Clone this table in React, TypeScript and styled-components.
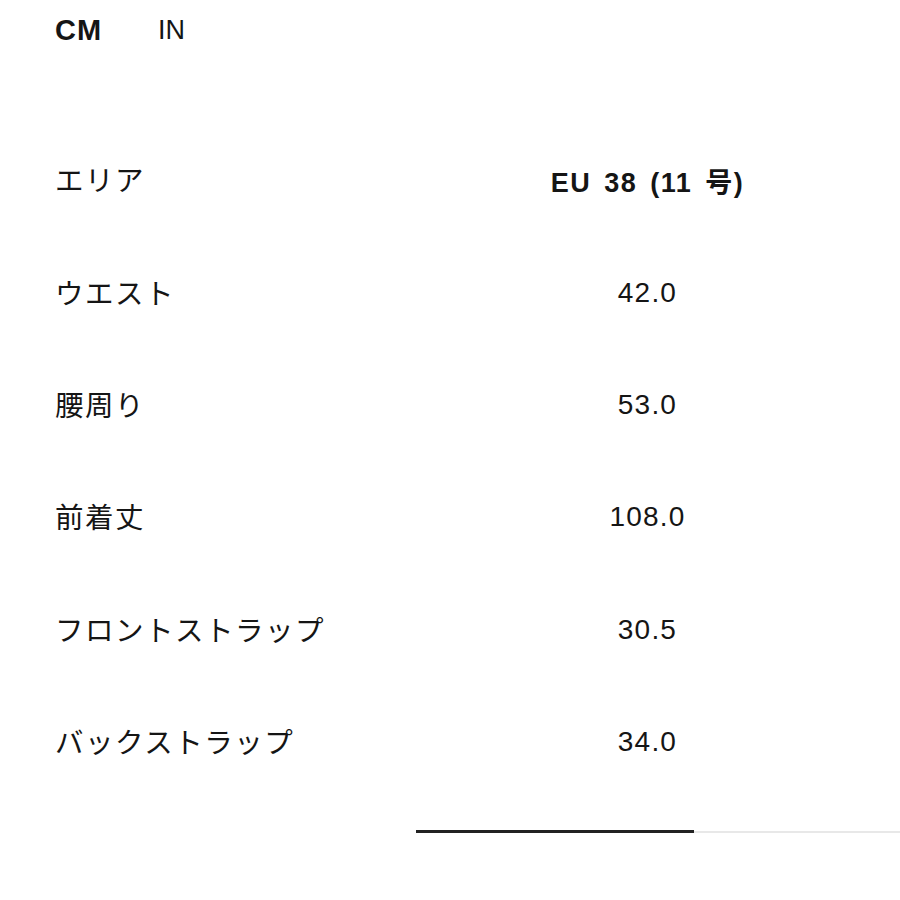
import styled, { createGlobalStyle } from "styled-components";

const GlobalStyle = createGlobalStyle`
  body {
    margin: 0;
    background: #ffffff;
    font-family: "Liberation Sans", "Noto Sans CJK JP", sans-serif;
    color: #151515;
  }
`;

const Page = styled.main`
  width: 900px;
  height: 900px;
  overflow: hidden;
  display: flex;
  flex-direction: column;
`;

const UnitTabs = styled.div`
  display: flex;
  align-items: center;
  gap: 56px;
  height: 60px;
  padding-left: 55px;
`;

const UnitTab = styled.button<{ $active?: boolean }>`
  border: none;
  background: none;
  padding: 0;
  font-family: inherit;
  color: inherit;
  font-size: ${({ $active }) => ($active ? "29px" : "27px")};
  letter-spacing: ${({ $active }) => ($active ? "1px" : "0")};
  font-weight: ${({ $active }) => ($active ? 700 : 400)};
`;

const Table = styled.div`
  margin-top: 64px;
  display: grid;
  grid-template-columns: 340px 1fr;
  grid-auto-rows: 112.4px;
  padding-left: 55px;
`;

const Label = styled.div`
  display: flex;
  align-items: center;
  font-size: 28.5px;
  letter-spacing: 1.5px;
  font-family: "Noto Sans CJK JP", sans-serif;
  font-weight: 400;
  padding-bottom: 3px;
`;

const Value = styled.div<{ $head?: boolean }>`
  display: flex;
  align-items: center;
  justify-content: center;
  font-size: ${({ $head }) => ($head ? "27px" : "28px")};
  font-weight: ${({ $head }) => ($head ? 700 : 400)};
  letter-spacing: ${({ $head }) => ($head ? "1.5px" : "1.2px")};
  word-spacing: ${({ $head }) => ($head ? "4px" : "0")};
`;

const Scroll = styled.div`
  margin-top: 32px;
  margin-left: 416px;
  display: flex;
  align-items: center;
  height: 3px;
`;

const Thumb = styled.div`
  width: 278px;
  height: 3px;
  background: #222;
`;

const Track = styled.div`
  flex: 1;
  height: 2px;
  background: #e8e8e8;
`;

const rows: [string, string][] = [
  ["ウエスト", "42.0"],
  ["腰周り", "53.0"],
  ["前着丈", "108.0"],
  ["フロントストラップ", "30.5"],
  ["バックストラップ", "34.0"],
];

export default function App() {
  return (
    <Page>
      <GlobalStyle />
      <UnitTabs>
        <UnitTab $active>CM</UnitTab>
        <UnitTab>IN</UnitTab>
      </UnitTabs>
      <Table>
        <Label>エリア</Label>
        <Value $head>EU 38 (11 号)</Value>
        {rows.flatMap(([label, value]) => [
          <Label key={label}>{label}</Label>,
          <Value key={label + "-v"}>{value}</Value>,
        ])}
      </Table>
      <Scroll>
        <Thumb />
        <Track />
      </Scroll>
    </Page>
  );
}
